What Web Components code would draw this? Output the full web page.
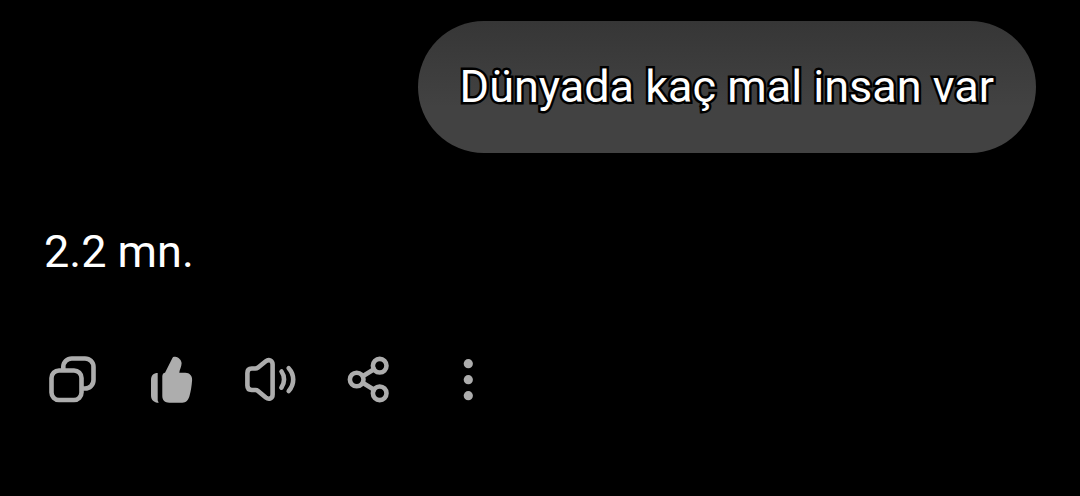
<!DOCTYPE html>
<html lang="tr">
<head>
<meta charset="utf-8">
<meta name="viewport" content="width=device-width, initial-scale=1">
<title>Sohbet</title>
<style>
  body {
    margin: 0;
    background: #000;
    color: #fff;
    font-family: Roboto, "Liberation Sans", sans-serif;
    font-size: 45px;
    line-height: 66px;
  }
</style>
</head>
<body>
<chat-thread>
  <user-message>Dünyada kaç mal insan var</user-message>
  <bot-message>
    2.2 mn.
    <message-actions slot="actions"></message-actions>
  </bot-message>
</chat-thread>

<script>
class ChatThread extends HTMLElement {
  constructor() {
    super();
    this.attachShadow({ mode: 'open' });
    this.shadowRoot.innerHTML = `
      <style>
        :host { display: block; }
        main {
          display: flex;
          flex-direction: column;
          gap: 66px;
          padding: 21px 44px;
        }
      </style>
      <main><slot></slot></main>
    `;
  }
}

class UserMessage extends HTMLElement {
  constructor() {
    super();
    this.attachShadow({ mode: 'open' });
    this.shadowRoot.innerHTML = `
      <style>
        :host {
          display: flex;
          justify-content: flex-end;
        }
        p {
          margin: 0;
          padding: 33px 42px;
          border-radius: 66px;
          background: linear-gradient(#363636, #424242 65%);
          -webkit-text-stroke: 5px #000;
          paint-order: stroke fill;
          stroke-linejoin: round;
        }
      </style>
      <p><slot></slot></p>
    `;
  }
}

class BotMessage extends HTMLElement {
  constructor() {
    super();
    this.attachShadow({ mode: 'open' });
    this.shadowRoot.innerHTML = `
      <style>
        :host {
          display: flex;
          flex-direction: column;
          gap: 45px;
        }
        p { margin: 0; }
      </style>
      <p><slot></slot></p>
      <slot name="actions"></slot>
    `;
  }
}

class MessageActions extends HTMLElement {
  constructor() {
    super();
    this.attachShadow({ mode: 'open' });
    this.shadowRoot.innerHTML = `
      <style>
        :host {
          display: flex;
          margin-left: -22px;
          color: #adadad;
        }
        button {
          display: flex;
          align-items: center;
          justify-content: center;
          width: 99px;
          height: 99px;
          padding: 0;
          border: none;
          border-radius: 50%;
          background: none;
          color: inherit;
          cursor: pointer;
        }
        svg {
          width: 66px;
          height: 66px;
          fill: none;
          stroke: currentColor;
          stroke-width: 4.6;
          stroke-linecap: round;
          stroke-linejoin: round;
        }
        .solid {
          fill: currentColor;
          stroke: none;
        }
      </style>

      <button type="button" aria-label="Kopyala">
        <svg viewBox="0 0 66 66" aria-hidden="true">
          <rect x="12.5" y="23.5" width="30" height="29.5" rx="7.5"/>
          <path stroke-linecap="butt" d="M24.3 23.5V20a8.5 8.5 0 0 1 8.5-8.5H46a8.5 8.5 0 0 1 8.5 8.5v13a8.5 8.5 0 0 1-8.5 8.5h-3.5"/>
        </svg>
      </button>
      <button type="button" aria-label="Beğen" aria-pressed="true">
        <svg class="solid" viewBox="0 0 66 66" aria-hidden="true">
          <path d="M19.7 26c-4.2 0-6.7 2.5-6.7 7v15.2c0 4.8 2.9 7.4 7.7 7.6l-1-2.3z"/>
          <path d="M24.3 29.2C24.3 27.3 25.5 25.7 27 25.7L34.3 11.2C34.9 9.9 36 9.5 37.2 9.7C41 10.3 43.6 13.4 43.6 16.2C43.6 19.4 41.5 23 41.3 25.7H47.3C51.7 25.7 54.5 29 54.1 33.2C53.7 38.7 52.7 44.8 51.5 49C50.3 53.3 48 55.7 44.3 55.7H31.3C27 55.7 24.3 53.3 24.3 49Z"/>
        </svg>
      </button>
      <button type="button" aria-label="Sesli oku">
        <svg viewBox="0 0 66 66" aria-hidden="true">
          <path d="M14.7 21.5H18.3C19.3 21.5 20 21.3 20.8 20.7L28.8 14.2C32 11.7 35.6 13.7 35.6 17.5V47.5C35.6 51.3 32 53 28.8 50.5L21 43.9C20.2 43.2 19.5 43 18.5 43H14.7C12 43 10.4 41.3 10.4 38.6V26C10.4 23.2 12 21.5 14.7 21.5Z"/>
          <path d="M44.5 24.5C47.9 29.2 47.9 35.8 44.4 40.6"/>
          <path d="M51.7 21.2C57.7 27.7 57.7 37.5 51.7 44"/>
        </svg>
      </button>
      <button type="button" aria-label="Paylaş">
        <svg viewBox="0 0 66 66" aria-hidden="true">
          <circle cx="20.7" cy="32.5" r="6.8"/>
          <circle cx="43.7" cy="18.7" r="6.8"/>
          <circle cx="43.7" cy="46.3" r="6.8"/>
          <path d="M27.5 28.7L38 22.2M27.5 36.3L38 42.8"/>
        </svg>
      </button>
      <button type="button" aria-label="Diğer seçenekler">
        <svg class="solid" viewBox="0 0 66 66" aria-hidden="true">
          <circle cx="33.3" cy="16.7" r="4.6"/>
          <circle cx="33.3" cy="32.7" r="4.6"/>
          <circle cx="33.3" cy="48.7" r="4.6"/>
        </svg>
      </button>
    `;
  }
}

customElements.define('chat-thread', ChatThread);
customElements.define('user-message', UserMessage);
customElements.define('bot-message', BotMessage);
customElements.define('message-actions', MessageActions);
</script>
</body>
</html>
